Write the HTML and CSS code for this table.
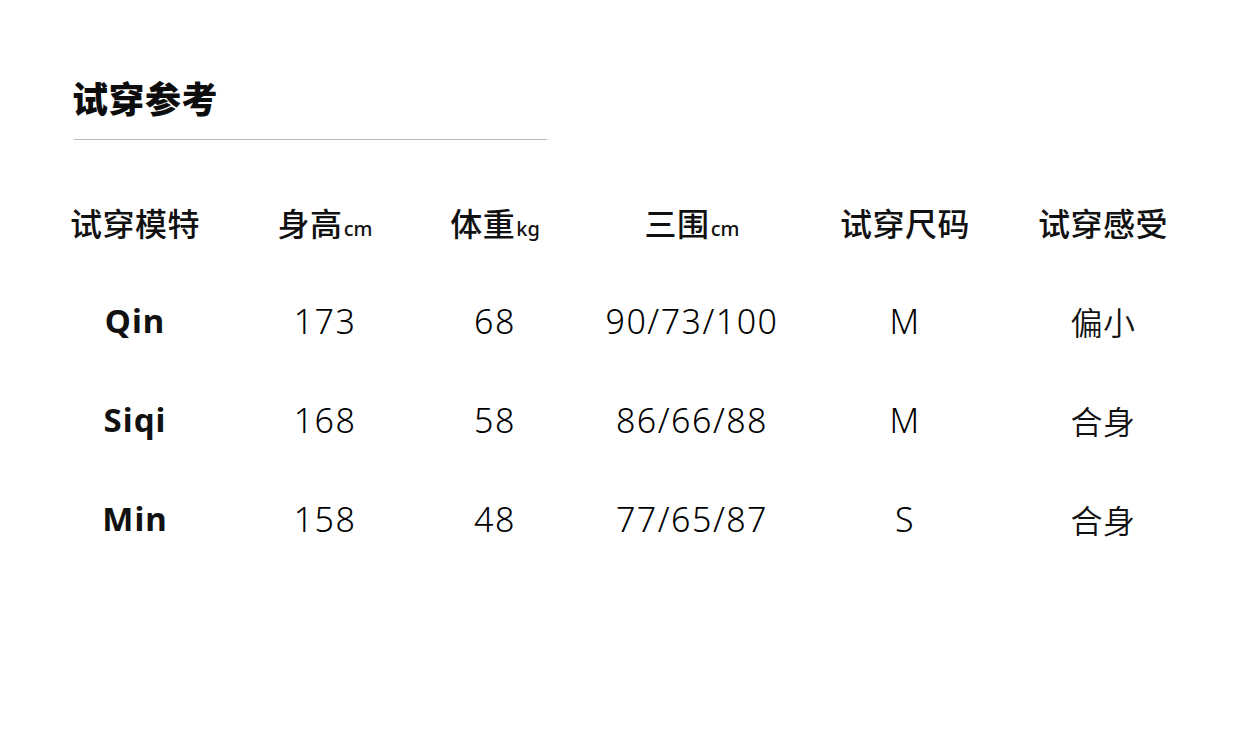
FILE: index.html
```
<!DOCTYPE html>
<html lang="zh-CN">
<head>
<meta charset="utf-8">
<title>试穿参考</title>
<link rel="stylesheet" href="styles.css">
</head>
<body>
<main class="page">
  <header class="head">
    <h1 class="title">试穿参考</h1>
  </header>
  <div class="table">
    <div class="row row-head">
      <div class="cell">试穿模特</div>
      <div class="cell">身高<span class="unit">cm</span></div>
      <div class="cell">体重<span class="unit">kg</span></div>
      <div class="cell">三围<span class="unit">cm</span></div>
      <div class="cell">试穿尺码</div>
      <div class="cell">试穿感受</div>
    </div>
    <div class="row">
      <div class="cell name">Qin</div>
      <div class="cell num">173</div>
      <div class="cell num">68</div>
      <div class="cell num">90/73/100</div>
      <div class="cell num">M</div>
      <div class="cell cjk">偏小</div>
    </div>
    <div class="row">
      <div class="cell name">Siqi</div>
      <div class="cell num">168</div>
      <div class="cell num">58</div>
      <div class="cell num">86/66/88</div>
      <div class="cell num">M</div>
      <div class="cell cjk">合身</div>
    </div>
    <div class="row">
      <div class="cell name">Min</div>
      <div class="cell num">158</div>
      <div class="cell num">48</div>
      <div class="cell num">77/65/87</div>
      <div class="cell num">S</div>
      <div class="cell cjk">合身</div>
    </div>
  </div>
</main>
</body>
</html>
```

FILE: styles.css
```
html, body {
  margin: 0;
  padding: 0;
  background: #ffffff;
}

body {
  width: 1240px;
  height: 747px;
  overflow: hidden;
  color: #111111;
  font-family: "Noto Sans", "Noto Sans CJK SC", sans-serif;
}

.page {
  padding: 72px 0 0 40px;
}

.head {
  margin-left: 34px;
  width: 473px;
  border-bottom: 1px solid #b8b8b8;
  padding-bottom: 17px;
}

.title {
  margin: 0;
  text-indent: -2px;
  font-family: "Noto Sans CJK SC", sans-serif;
  font-weight: 900;
  font-size: 36px;
  line-height: 50px;
  letter-spacing: 0.5px;
  color: #0d0d0d;
}

.table {
  margin-top: 32px;
  display: flex;
  flex-direction: column;
}

.row {
  display: grid;
  grid-template-columns: 190px 190px 150px 244px 182px 214px;
  height: 99px;
  align-items: center;
}

.row-head {
  height: 99px;
}

.cell {
  text-align: center;
  white-space: nowrap;
}

.row-head .cell {
  font-family: "Noto Sans CJK SC", sans-serif;
  font-weight: 500;
  font-size: 32px;
  letter-spacing: 0.5px;
  line-height: 40px;
}

.unit {
  font-family: "Noto Sans", sans-serif;
  font-weight: 500;
  font-size: 20px;
  line-height: 1;
  letter-spacing: 0;
  margin-left: 1px;
}

.name {
  font-family: "Noto Sans", sans-serif;
  font-weight: 700;
  font-size: 33px;
  letter-spacing: 1px;
  line-height: 40px;
}

.num {
  font-family: "Noto Sans", sans-serif;
  font-weight: 300;
  font-size: 34px;
  letter-spacing: 1.5px;
  line-height: 40px;
  color: #000000;
}

.cjk {
  font-family: "Noto Sans CJK SC", sans-serif;
  font-weight: 350;
  font-size: 32px;
  letter-spacing: 0.5px;
  line-height: 40px;
}
```
